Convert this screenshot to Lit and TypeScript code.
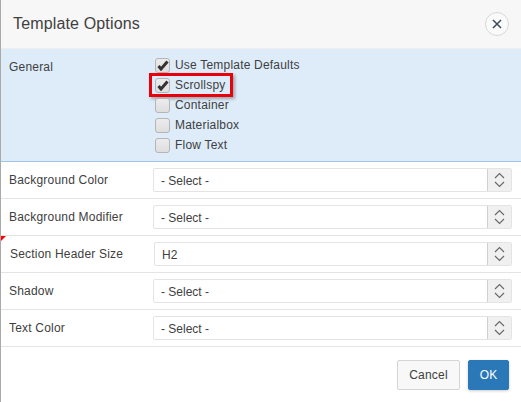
import { LitElement, html, css } from "lit";
import { customElement } from "lit/decorators.js";

const checks = [
  { label: "Use Template Defaults", on: true, mark: false },
  { label: "Scrollspy", on: true, mark: true },
  { label: "Container", on: false, mark: false },
  { label: "Materialbox", on: false, mark: false },
  { label: "Flow Text", on: false, mark: false },
];
const rows = [
  { label: "Background Color", value: "- Select -", shift: false },
  { label: "Background Modifier", value: "- Select -", shift: false },
  { label: "Section Header Size", value: "H2", shift: true },
  { label: "Shadow", value: "- Select -", shift: false },
  { label: "Text Color", value: "- Select -", shift: false },
];

@customElement("app-root")
export class AppRoot extends LitElement {
  static styles = css`
    :host { display: block; width: 521px; height: 402px; overflow: hidden; background: #fff; font-family: "Liberation Sans", Arial, sans-serif; font-size: 12px; color: #404040; }
    .dialog { height: 402px; border-left: 1px solid #aaa; box-sizing: border-box; display: flex; flex-direction: column; }
    .head { height: 49px; box-sizing: border-box; background: #f7f7f7; border-bottom: 1px solid #eee; display: flex; align-items: center; justify-content: space-between; padding: 0 12px 0 12px; }
    h1 { margin: 0; font-size: 16px; font-weight: 400; color: #404040; letter-spacing: 0.15px; }
    .close { width: 24px; height: 24px; box-sizing: border-box; border: 1px solid #d8d8d8; border-radius: 50%; background: #fafafa; display: flex; align-items: center; justify-content: center; }
    .general { height: 113px; box-sizing: border-box; background: #deecf9; border-bottom: 1px solid #9ec6e8; display: flex; padding: 6px 0 0 8px; }
    .general .name { width: 146px; padding-top: 5px; letter-spacing: 0.2px; }
    .checks { display: flex; flex-direction: column; }
    .check { height: 20px; display: flex; align-items: center; gap: 5px; position: relative; letter-spacing: 0.2px; color: #404040; }
    .box { width: 15px; height: 15px; box-sizing: border-box; border: 1px solid #b5b5b5; border-radius: 3px; background: linear-gradient(#ececec, #dedede); display: flex; align-items: center; justify-content: center; }
    .mark { position: absolute; left: -6px; top: -2px; width: 84px; height: 24px; box-sizing: border-box; border: 3px solid #e8000a; box-shadow: 2px 2px 3px rgba(0, 0, 0, 0.3); pointer-events: none; }
    .row { height: 37px; box-sizing: border-box; border-bottom: 1px solid #e4e4e4; display: flex; align-items: center; padding: 0 8px; position: relative; }
    .row .name { width: 144px; letter-spacing: 0.2px; }
    .row.shift .name { padding-left: 1px; }
    .row.shift .select { width: 358px; }
    .flag { position: absolute; left: 0; top: 0; width: 0; height: 0; border-top: 5px solid #f00; border-right: 5px solid transparent; }
    .select { width: 359px; height: 24px; box-sizing: border-box; border: 1px solid #e4e4e4; border-radius: 2px; display: flex; align-items: stretch; background: #fff; }
    .value { flex: 1; padding: 1px 0 0 7px; display: flex; align-items: center; color: #404040; }
    .spin { width: 23px; background: #f0f0f0; border-left: 1px solid #d0d0d0; display: flex; align-items: center; justify-content: center; }
    .foot { flex: 1; display: flex; justify-content: flex-end; gap: 8px; padding: 13px 12px 0 0; }
    button { height: 30px; box-sizing: border-box; border-radius: 2px; font-family: inherit; font-size: 12px; padding: 0; letter-spacing: 0.2px; }
    .cancel { width: 63px; background: #f8f8f8; border: 1px solid #d5d5d5; color: #404040; }
    .ok { width: 41px; background: #2a78b8; border: 1px solid #2a78b8; color: #fff; box-shadow: 0 1px 3px rgba(0, 0, 0, 0.2); }
  `;

  render() {
    return html`<div class="dialog">
      <div class="head">
        <h1>Template Options</h1>
        <div class="close">
          <svg width="10" height="10" viewBox="0 0 10 10"><path d="M1 1l8 8M9 1l-8 8" stroke="#3a4a5a" stroke-width="1.5" fill="none"/></svg>
        </div>
      </div>
      <div class="general">
        <div class="name">General</div>
        <div class="checks">
          ${checks.map((c) => html`<div class="check">
            <span class="box">${c.on ? html`<svg width="12" height="11" viewBox="0 0 12 11"><path d="M1.5 6l2.5 3L10.5 1.5" stroke="#333" stroke-width="3" fill="none"/></svg>` : ""}</span>
            <span>${c.label}</span>
            ${c.mark ? html`<span class="mark"></span>` : ""}
          </div>`)}
        </div>
      </div>
      ${rows.map((r) => html`<div class="row ${r.shift ? "shift" : ""}">
        ${r.shift ? html`<span class="flag"></span>` : ""}
        <div class="name">${r.label}</div>
        <div class="select">
          <div class="value">${r.value}</div>
          <div class="spin"><svg width="11" height="16" viewBox="0 0 11 16"><path d="M1 6l4.5-4.5L10 6M1 10l4.5 4.5L10 10" stroke="#666" stroke-width="1.1" fill="none"/></svg></div>
        </div>
      </div>`)}
      <div class="foot">
        <button class="cancel">Cancel</button>
        <button class="ok">OK</button>
      </div>
    </div>`;
  }
}
